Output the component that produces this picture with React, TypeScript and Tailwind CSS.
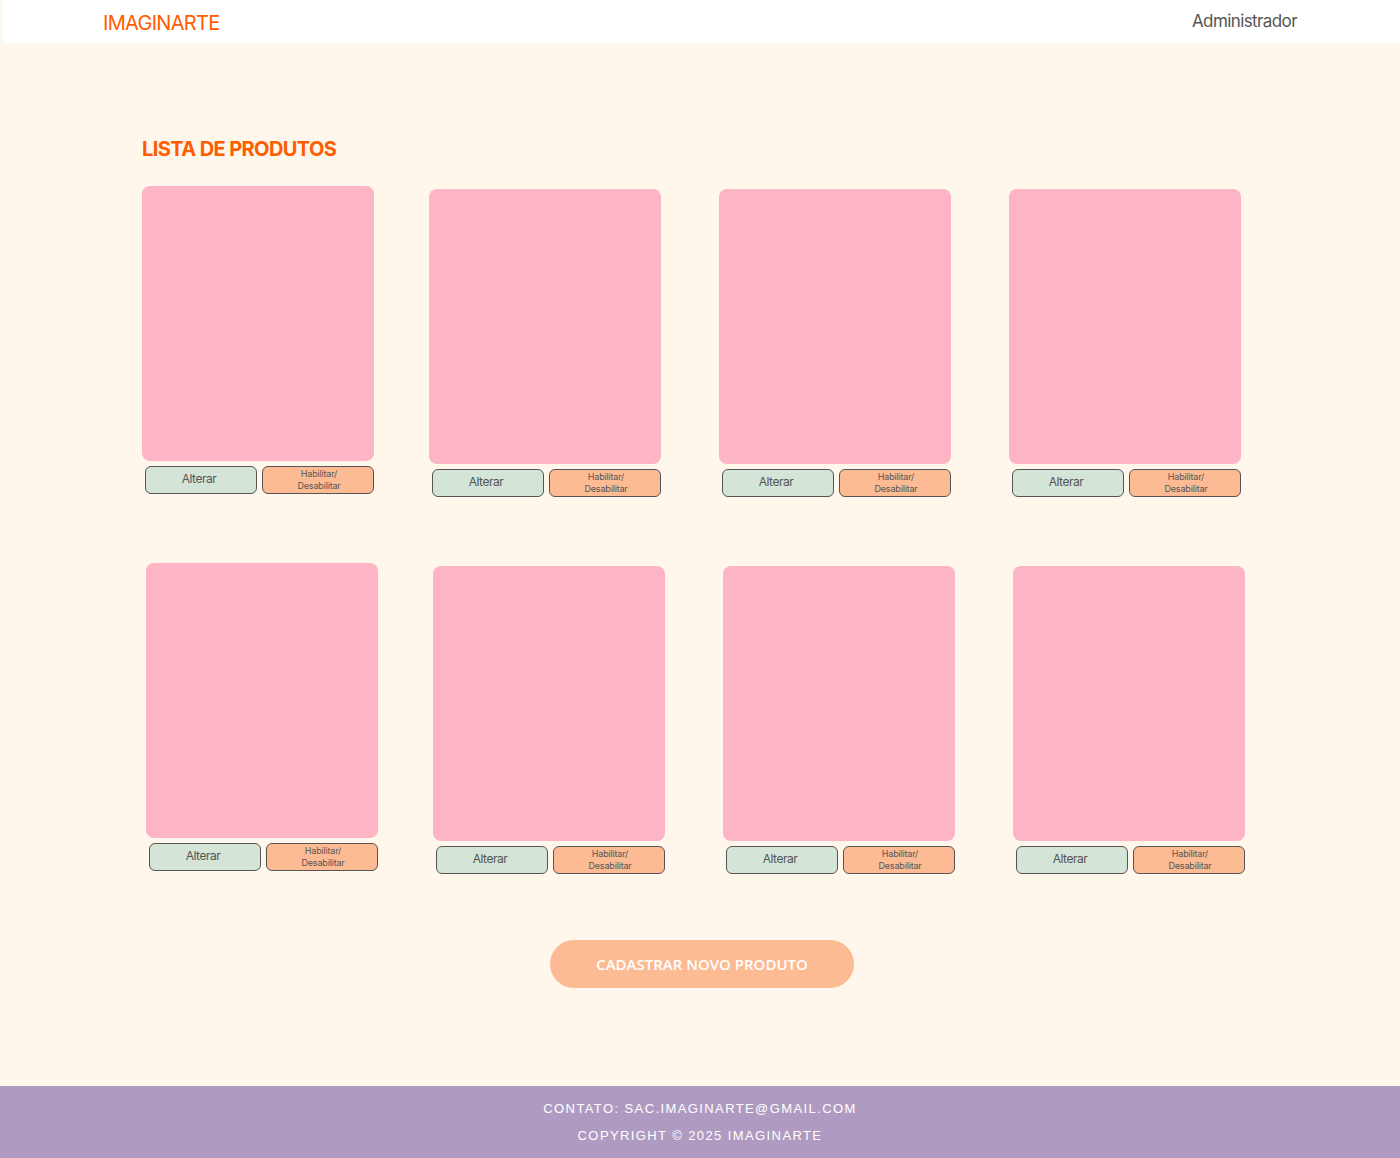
const products = [1, 2, 3, 4]

const ProductCard = ({ first }: { first?: boolean }) => {
  return (
    <div className={first ? 'w-[232px] ml-[3px] -mr-[3px] -mt-[3px] mb-[3px]' : 'w-[232px]'}>
      <div className="h-[275px] rounded-[8px] bg-[#fdb5c6]" />
      <div className="mt-[5px] flex gap-[5px] pl-[3px]">
        <button className="h-[28px] w-[112px] rounded-[6px] border border-[#555] bg-[#d4e4d7] pr-[4px] text-[12px] leading-[16px] pb-[2px] tracking-[-0.04em] text-[#555] font-['Inter',sans-serif]">
          Alterar
        </button>
        <button className="h-[28px] w-[112px] rounded-[6px] border border-[#555] bg-[#fdbb94] pl-[2px] text-[9px] leading-[12px] tracking-[-0.02em] text-[#555] font-['Inter',sans-serif]">
          Habilitar/
          <br />
          Desabilitar
        </button>
      </div>
    </div>
  )
}

const App = () => {
  return (
    <div className="min-h-screen flex flex-col bg-[#fff6ec] font-['Inter',sans-serif]">
      <header className="ml-[2px] h-[43px] bg-white flex items-center justify-between pl-[101px] pr-[103px]">
        <span className="text-[20px] text-[#ff5c00] tracking-[-0.035em] pt-[3px]">IMAGINARTE</span>
        <span className="text-[17px] text-[#555] tracking-[-0.035em]">Administrador</span>
      </header>

      <main className="flex-1 pt-[92px] pb-[98px]">
        <h2 className="ml-[142px] text-[20px] leading-[28px] font-bold text-[#ff5c00] tracking-[-0.03em]">
          LISTA DE PRODUTOS
        </h2>

        <div className="mt-[26px] ml-[139px] flex gap-[58px]">
          {products.map((p) => (
            <ProductCard key={p} first={p === 1} />
          ))}
        </div>

        <div className="mt-[69px] ml-[143px] flex gap-[58px]">
          {products.map((p) => (
            <ProductCard key={p} first={p === 1} />
          ))}
        </div>

        <div className="mt-[66px] flex justify-center pl-[4px]">
          <button className="h-[48px] w-[304px] rounded-full bg-[#fdbb94] text-white text-[15px] font-semibold font-['Open_Sans',sans-serif]">
            CADASTRAR NOVO PRODUTO
          </button>
        </div>
      </main>

      <footer className="h-[72px] bg-[#af9bc1] flex flex-col items-center justify-center gap-[9px] text-white text-[13px] leading-[18px] tracking-[1.4px] font-['Liberation_Sans',sans-serif]">
        <p>CONTATO: SAC.IMAGINARTE@GMAIL.COM</p>
        <p>COPYRIGHT © 2025 IMAGINARTE</p>
      </footer>
    </div>
  )
}

export default App
